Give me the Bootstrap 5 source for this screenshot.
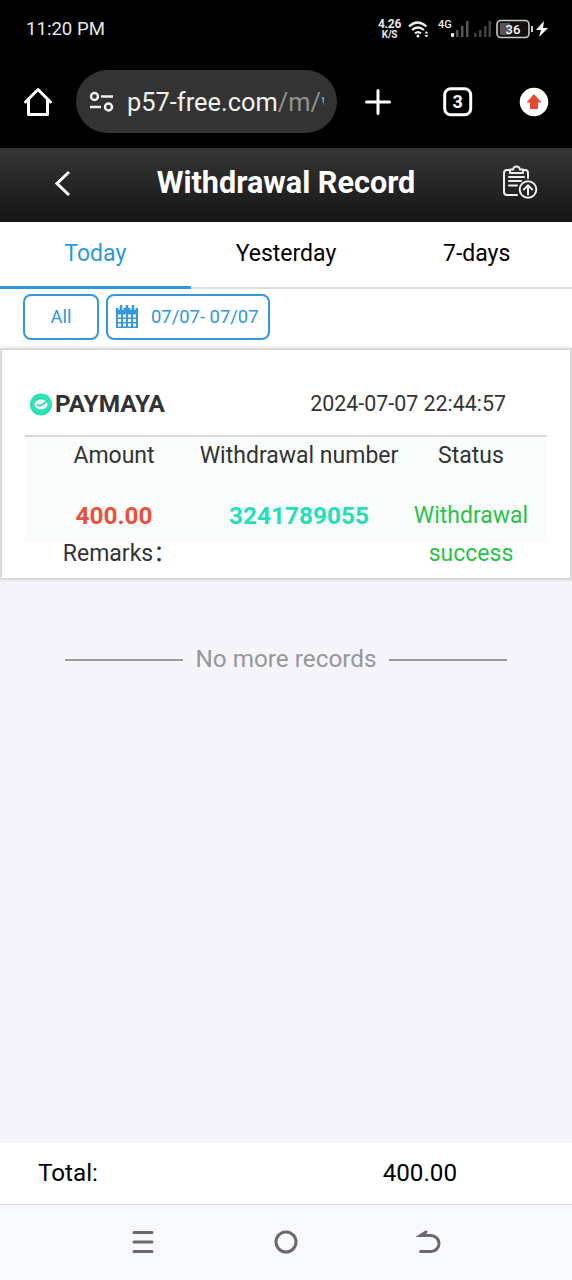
<!DOCTYPE html>
<html lang="en">
<head>
<meta charset="utf-8">
<meta name="viewport" content="width=device-width, initial-scale=1">
<title>Withdrawal Record</title>
<link href="https://cdn.jsdelivr.net/npm/bootstrap@5.3.0/dist/css/bootstrap.min.css" rel="stylesheet">
<style>
body{font-family:Roboto,"Liberation Sans",sans-serif;font-size:23px;line-height:38px;background:#f4f4fa;color:#000;height:1280px;overflow:hidden}
svg{display:block;flex:none}
.status-bar{height:58px;padding:0 24px 0 26px;font-size:18.6px;color:#e8e8e8}
.net-speed{font-size:12px;line-height:11px;font-weight:700;width:23px;margin-right:7px;letter-spacing:-.3px}
.net-speed small{display:block;font-size:10px;line-height:9px}
.browser-bar{height:90px;padding:0 23px 3px}
.url-pill{width:261px;height:63px;background:#333;padding:0 12px;margin-left:23px;font-size:25.4px;color:#f1f1f1}
.url-text{width:197px;margin-left:13px;overflow:hidden;white-space:nowrap;line-height:40px}
.url-path{color:#929292}
.title-bar{height:74px;background:linear-gradient(#363636,#151515);padding:0 34px 4px 54px}
.title-bar h1{font-size:30.6px;line-height:40px;margin:0 2px 0 0}
.day-tabs{height:67px;background:#fff;border-bottom:2px solid #dedede}
.day-tabs .nav-link{color:#000;padding:0;height:67px;line-height:64px;border-bottom:3px solid transparent}
.day-tabs .nav-link.active{color:#3096dc;border-color:#3096dc}
.filters{height:59px;background:#fff;padding:5px 23px 0;gap:7px}
.filters .btn{height:46px;border:2px solid #3498db;border-radius:8px;color:#3096dc;font-size:18.4px;line-height:42px;padding:0}
.record{margin-top:2px;border:0;border-radius:0;height:228px;margin-left:2px;margin-right:2px;padding:0 23px;box-shadow:0 0 3px 2px #cfcfd1;color:#333}
.record-head{flex:none;height:87px;padding:35px 41px 0 4px;border-bottom:2px solid #d8d8d8;font-size:21.4px}
.provider{font-size:24.4px;font-weight:700}
.record-grid{grid-template-columns:178px 192px 152px;background:linear-gradient(#fafbfb,#fafbfb) 0 0/100% 105px no-repeat}
.caption-wide{white-space:nowrap;justify-self:center}
.figure-cell{padding-top:22px;font-weight:700;font-size:24.4px}
.amount{color:#e8523c}
.number{color:#26dfb8}
.state{padding-top:22px;color:#2bc24a;grid-row:2/4;grid-column:3}
.remarks{grid-row:3;grid-column:1;font-family:Roboto,"Noto Sans CJK SC",sans-serif;padding-left:11px}
.end-line{width:118px;height:2px;background:#99999d}
.end-note{margin-top:63px;color:#97979a;font-size:24.3px;gap:12px}
.end-text{position:relative;top:-1px}
.total-bar{height:61px;background:#fff;padding:0 115px 2px 38px;font-size:24.2px}
.system-nav{height:76px;background:#f8f9ff;border-top:1px solid #d7d7dc;padding:0 130px 2px}
</style>
</head>
<body class="d-flex flex-column">
<header class="bg-black">
  <div class="status-bar d-flex align-items-center justify-content-between">
    <span class="clock">11:20 PM</span>
    <div class="d-flex align-items-center">
      <div class="net-speed text-center">4.26<small>K/S</small></div>
      <svg width="22" height="19" viewBox="0 0 22 19" fill="none" stroke="#eee" stroke-width="2.2"><path d="M1 6.500Q9.500-1.500 18.500 6.500M4 10q6-5 12 0M7 13.300q3-2.500 6 0"/><circle cx="10" cy="16" r="1.500" fill="#eee" stroke="none"/><path d="M16.500 13.500l2-2.500 2 2.500zM16.500 15l2 2.500 2-2.500z" fill="#eee" stroke="none"/></svg>
      <svg class="ms-2" width="31" height="20" viewBox="0 0 31 20"><text x="0" y="9" font-size="11" font-weight="500" fill="#eee">4G</text><rect x="13" y="14" width="3" height="4" rx="1" fill="#eee"/><path d="M18 11h2.500v7H18zM23 7h2.500v11H23zM28 2h2.500v16H28z" fill="#555"/></svg>
      <svg style="margin-left:5px" width="18" height="20" viewBox="0 0 18 20"><path d="M0 14h2.500v4H0zM5 11h2.500v7H5zM10 7h2.500v11H10zM14.500 2H17v16h-2.500z" fill="#444"/></svg>
      <svg class="ms-1" width="52" height="20" viewBox="0 0 52 20"><rect x="1" y="1.500" width="32" height="17" rx="4" fill="#111" stroke="#ccc" stroke-width="1.600"/><path d="M4 4h10v12H4z" fill="#555"/><text x="17" y="14.500" font-size="13" font-weight="500" text-anchor="middle" fill="#fff">36</text><path d="M35 7h2v6h-2z" fill="#ccc"/><path d="M48 2l-8 9h5l-2 7 9-9h-5z" fill="#fff"/></svg>
    </div>
  </div>
  <div class="browser-bar d-flex align-items-center">
    <svg width="30" height="30" viewBox="0 0 30 30" fill="none" stroke="#fff" stroke-width="3" stroke-linejoin="round" stroke-linecap="round"><path d="M2.500 15L15 2.500 27.500 15M5.500 13v14.500h19V13"/></svg>
    <div class="url-pill rounded-pill d-flex align-items-center">
      <svg width="26" height="22" viewBox="0 0 26 22" fill="none" stroke="#f1f1f1" stroke-width="2.500"><circle cx="6.500" cy="5.500" r="3.500"/><circle cx="20.500" cy="16" r="3.500"/><path d="M13 5.500h12M2 16h11"/></svg>
      <div class="url-text">p57-free.com<span class="url-path">/m/w</span></div>
    </div>
    <svg style="margin-left:28px" width="26" height="26" viewBox="0 0 26 26" stroke="#fff" stroke-width="3" stroke-linecap="round"><path d="M13 1.500v23M1.500 13h23"/></svg>
    <svg style="margin-left:52px" width="30" height="30" viewBox="0 0 30 30"><rect x="1.700" y="1.700" width="26" height="26" rx="6" fill="none" stroke="#fff" stroke-width="3"/><text x="14.700" y="21" font-size="18" font-weight="700" text-anchor="middle" fill="#fff">3</text></svg>
    <svg style="margin-left:46px" width="30" height="30" viewBox="0 0 30 30"><circle cx="15" cy="15" r="14.300" fill="#fff"/><path d="M15 7l7.500 8.500H19V22h-8v-6.500H7.500z" fill="#e5492f"/></svg>
  </div>
  <div class="title-bar d-flex align-items-center justify-content-between text-white">
    <svg width="18" height="28" viewBox="0 0 18 28" fill="none" stroke="#fff" stroke-width="3"><path d="M15 3L3 14.500 15 26"/></svg>
    <h1 class="fw-bold">Withdrawal Record</h1>
    <svg width="36" height="36" viewBox="0 0 36 36" fill="none" stroke="#eee" stroke-width="2" stroke-linecap="round" stroke-linejoin="round"><path d="M8 5H5a3 3 0 0 0-3 3V27a3 3 0 0 0 3 3h10M21 5h2a3 3 0 0 1 3 3v5M8 8V4.500h3Q11.500 1.500 14.500 1.500t3.500 3h3V8zM7 12h15M7 16h12M7 20.500h8"/><circle cx="26" cy="24.500" r="8.300"/><path d="M26 29.500v-9M21.800 24.500l4.200-4.200 4.200 4.200"/></svg>
  </div>
</header>
<main class="flex-grow-1">
  <nav class="day-tabs nav nav-fill flex-nowrap">
    <a class="nav-link active col-4" href="#">Today</a>
    <a class="nav-link col-4" href="#">Yesterday</a>
    <a class="nav-link col-4" href="#">7-days</a>
  </nav>
  <div class="filters d-flex">
    <button class="btn" style="width:76px">All</button>
    <button class="btn d-flex align-items-center" style="width:164px">
      <svg style="margin-left:8px;margin-right:13px" width="22" height="24" viewBox="0 0 22 24"><path d="M0 3h22v20H0z" fill="#3498db"/><path d="M5 0v5M17 0v5" stroke="#fff" stroke-width="5"/><path d="M5 1v4M17 1v4M11 1v4" stroke="#3498db" stroke-width="2.600" stroke-linecap="round"/><path d="M2 11h18M2 15.500h18M2 20h18" stroke="#fff" stroke-width="2.800" stroke-dasharray="3 2"/></svg>07/07- 07/07
    </button>
  </div>
  <article class="record card">
    <div class="record-head d-flex align-items-start justify-content-between">
      <div class="provider d-flex align-items-center"><svg style="margin-right:3px" width="23" height="24" viewBox="0 0 23 24"><circle cx="12" cy="12.500" r="11" fill="#23dfb3"/><circle cx="12" cy="12" r="8" fill="none" stroke="#8cf0d9" stroke-dasharray="1 1.500"/><ellipse cx="12" cy="12.500" rx="6.500" ry="5" fill="#fff"/><path d="M8 12.500l3 1.500 7-4.500" fill="none" stroke="#23dfb3" stroke-width="1.600"/></svg>PAYMAYA</div>
      <time>2024-07-07 22:44:57</time>
    </div>
    <div class="record-grid d-grid text-center">
      <div>Amount</div><div class="caption-wide">Withdrawal number</div><div>Status</div>
      <div class="figure-cell amount">400.00</div><div class="figure-cell number">3241789055</div><div class="state">Withdrawal success</div>
      <div class="remarks">Remarks：</div>
    </div>
  </article>
  <div class="end-note d-flex align-items-center justify-content-center"><span class="end-line"></span><span class="end-text">No more records</span><span class="end-line"></span></div>
</main>
<footer>
  <div class="total-bar d-flex align-items-center justify-content-between"><span>Total:</span><span>400.00</span></div>
  <div class="system-nav d-flex align-items-center justify-content-between">
    <svg width="26" height="26" viewBox="0 0 26 26" stroke="#68686d" stroke-width="3" stroke-linecap="round"><path d="M4 3.500h18M4 13h18M4 22.500h18"/></svg>
    <svg width="26" height="26" viewBox="0 0 26 26"><circle cx="13" cy="13" r="10" fill="none" stroke="#68686d" stroke-width="3"/></svg>
    <svg width="26" height="26" viewBox="0 0 26 26" fill="none" stroke="#68686d" stroke-width="3" stroke-linecap="round"><path d="M10 3L4.500 6.500H15a8 8 0 0 1 0 16H4.500"/></svg>
  </div>
</footer>
<script src="https://cdn.jsdelivr.net/npm/bootstrap@5.3.0/dist/js/bootstrap.bundle.min.js"></script>
</body>
</html>
